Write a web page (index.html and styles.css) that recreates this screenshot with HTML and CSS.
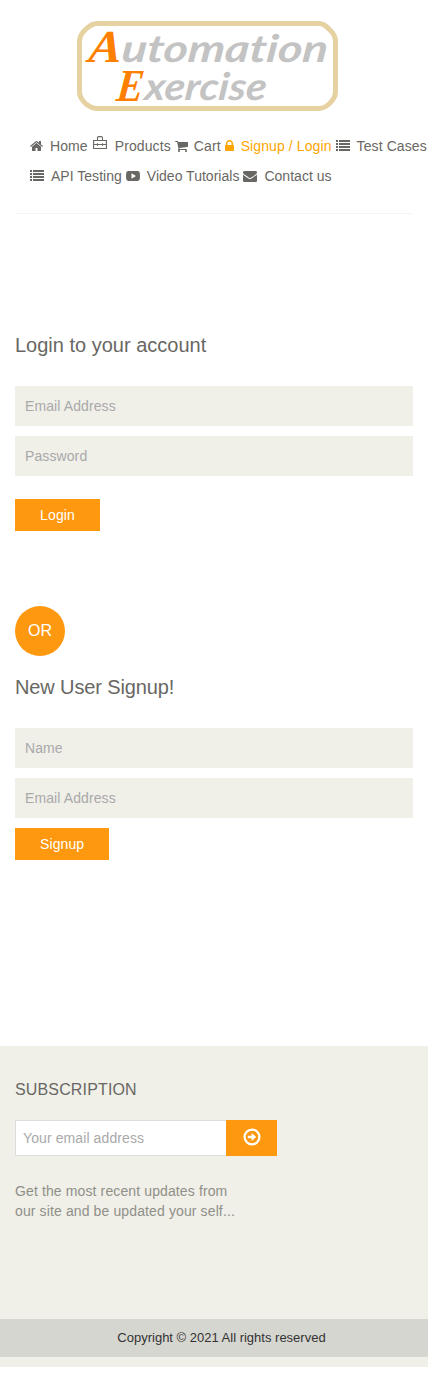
FILE: index.html
```html
<!DOCTYPE html>
<html lang="en">
<head>
<meta charset="utf-8">
<title>Automation Exercise - Signup / Login</title>
<link rel="stylesheet" href="styles.css">
</head>
<body>
<header class="header">
  <a class="logo" aria-label="Automation Exercise">
    <svg width="262" height="91" viewBox="0 0 262 91">
      <path class="logo-frame" d="M20 2.500H242Q247 2.500 252 8Q258.500 14 258.500 20V71Q258.500 77 252 83Q247 87.500 242 87.500H20Q15 87.500 9 83Q2.500 77 2.500 71V20Q2.500 14 9 8Q15 2.500 20 2.500Z"/>
      <g transform="skewX(-6)">
        <text class="logo-cap" x="15" y="41" textLength="33" lengthAdjust="spacingAndGlyphs">A</text>
        <text class="logo-word" x="48" y="41" textLength="206" lengthAdjust="spacingAndGlyphs">utomation</text>
        <text class="logo-cap" x="47" y="80" textLength="27" lengthAdjust="spacingAndGlyphs">E</text>
        <text class="logo-word" x="75" y="79" textLength="122" lengthAdjust="spacingAndGlyphs">xercise</text>
      </g>
    </svg>
  </a>
  <nav class="nav">
    <ul class="nav-row">
      <li><svg class="icon home" viewBox="64 128 1664 1536"><path d="M1472 992v480q0 26-19 45t-45 19h-384v-384h-256v384h-384q-26 0-45-19t-19-45v-480q0-1 .5-3t.5-3l575-474 575 474q1 2 1 6zm223-69l-62 74q-8 9-21 11h-3q-13 0-21-7l-692-577-692 577q-12 8-24 7-13-2-21-11l-62-74q-8-10-7-23.500t11-21.500l719-599q32-26 76-26t76 26l244 204v-195q0-14 9-23t23-9h192q14 0 23 9t9 23v408l219 182q10 8 11 21.500t-7 23.500z"/></svg>Home</li>
      <li><svg class="icon bag" viewBox="0 0 14 14"><path class="line" d="M.6 4.500H13.400V12.500H.6ZM4.500 4.500V2Q4.500 .6 5.800 .6H8.200Q9.500 .6 9.500 2V4.500M.6 8.500H13.400M4.500 7.300V9.700M9.500 7.300V9.700"/></svg>Products</li>
      <li><svg class="icon cart" viewBox="64 256 1664 1408"><path d="M704 1536q0 52-38 90t-90 38-90-38-38-90 38-90 90-38 90 38 38 90zm896 0q0 52-38 90t-90 38-90-38-38-90 38-90 90-38 90 38 38 90zm128-1088v512q0 24-16.500 42.500t-40.500 21.500l-1044 122q13 60 13 70 0 16-24 64h920q26 0 45 19t19 45-19 45-45 19h-1024q-26 0-45-19t-19-45q0-11 8-31.500t16-36 21.500-40 15.500-29.500l-177-823h-204q-26 0-45-19t-19-45 19-45 45-19h256q16 0 28.500 6.500t19.500 15.500 13 24.500 8 26 5.500 29.500 4.500 26h1201q26 0 45 19t19 45z"/></svg>Cart</li>
      <li class="active"><svg class="icon lock" viewBox="320 128 1152 1408"><path d="M640 768h512v-192q0-106-75-181t-181-75-181 75-75 181v192zm832 96v576q0 40-28 68t-68 28h-960q-40 0-68-28t-28-68v-576q0-40 28-68t68-28h32v-192q0-184 132-316t316-132 316 132 132 316v192h32q40 0 68 28t28 68z"/></svg>Signup / Login</li>
      <li><svg class="icon list" viewBox="0 0 14 11"><path d="M0 0h2v2H0zM3 0h11v2H3zM0 3h2v2H0zM3 3h11v2H3zM0 6h2v2H0zM3 6h11v2H3zM0 9h2v2H0zM3 9h11v2H3z"/></svg>Test Cases</li>
    </ul>
    <ul class="nav-row second">
      <li><svg class="icon list" viewBox="0 0 14 11"><path d="M0 0h2v2H0zM3 0h11v2H3zM0 3h2v2H0zM3 3h11v2H3zM0 6h2v2H0zM3 6h11v2H3zM0 9h2v2H0zM3 9h11v2H3z"/></svg>API Testing</li>
      <li><svg class="icon video" viewBox="0 0 14 10"><path fill-rule="evenodd" d="M2.300.1Q7-.1 11.700.1 13.600.2 13.800 2 14.100 5 13.800 8 13.600 9.800 11.700 9.900 7 10.100 2.300 9.900.4 9.800.2 8-.1 5 .2 2 .4.2 2.300.1ZM5.500 2.200V7.800L10 5Z"/></svg>Video Tutorials</li>
      <li><svg class="icon mail" viewBox="0 256 1792 1408"><path d="M1792 710v794q0 66-47 113t-113 47h-1472q-66 0-113-47t-47-113v-794q44 49 101 87 362 246 497 345 57 42 92.500 65.500t94.500 48 110 24.500h2q51 0 110-24.500t94.500-48 92.500-65.500q170-123 498-345 57-39 100-87zm0-294q0 79-49 151t-122 123q-376 261-468 325-10 7-42.500 31t-54 38.500-52 32.500-57.500 27-50 9h-2q-23 0-50-9t-57.500-27-52-32.500-54-38.500-42.500-31q-91-64-262-182.500t-205-142.500q-62-42-117-115.500t-55-136.500q0-78 41.500-130t118.500-52h1472q65 0 112.500 47t47.500 113z"/></svg>Contact us</li>
    </ul>
  </nav>
</header>
<main class="forms">
  <form class="login">
    <h2>Login to your account</h2>
    <input class="field" type="email" placeholder="Email Address">
    <input class="field" type="password" placeholder="Password">
    <button class="btn login-btn" type="button">Login</button>
  </form>
  <div class="or">OR</div>
  <form class="signup">
    <h2>New User Signup!</h2>
    <input class="field" type="text" placeholder="Name">
    <input class="field" type="email" placeholder="Email Address">
    <button class="btn" type="button">Signup</button>
  </form>
</main>
<footer class="footer">
  <div class="subscribe">
    <h3>SUBSCRIPTION</h3>
    <form class="subscribe-form">
      <input type="email" placeholder="Your email address">
      <button type="button" aria-label="Subscribe"><svg width="18" height="18" viewBox="0 0 18 18"><circle cx="9" cy="9" r="7.400"/><path d="M4.800 7.700H8.600V4.900L13.200 9 8.600 13.100V10.300H4.800Z"/></svg></button>
    </form>
    <p>Get the most recent updates from<br>our site and be updated your self...</p>
  </div>
  <div class="copyright">Copyright © 2021 All rights reserved</div>
</footer>
</body>
</html>
```

FILE: styles.css
```css
* { box-sizing: border-box; }
body {
  margin: 0;
  background: #fff;
  color: #696763;
  font: 14px/20px "Liberation Sans", Arial, sans-serif;
  letter-spacing: .1px;
  overflow-x: hidden;
}
h2, h3, p, ul { margin: 0; padding: 0; font-weight: 400; }
input, button { font: inherit; letter-spacing: .1px; border: 0; border-radius: 0; outline: 0; }
input::placeholder { color: #a9a9a9; opacity: 1; }

.header { margin: 0 15px; height: 214px; padding-top: 21px; border-bottom: 1px solid #f5f5f5; }
.logo { display: block; margin-left: 62px; height: 91px; letter-spacing: 0; }
.logo svg { display: block; }
.logo-frame { fill: #fff; stroke: #e6d1a1; stroke-width: 5; }
.logo-cap { fill: #ff7f00; font: italic 700 46px "Liberation Serif", serif; }
.logo-word { fill: #c3c3c3; font: italic 700 38px Lato, sans-serif; font-variant-ligatures: none; }

.nav { padding: 19px 0 0 15px; }
.nav-row { display: flex; gap: 4px; height: 30px; list-style: none; white-space: nowrap; line-height: 30px; }
.nav-row li { display: flex; align-items: center; flex: none; }
.second { letter-spacing: .02px; }
.active { color: #ffa500; }
.icon { flex: none; fill: currentColor; }
.home { width: 13px; height: 12px; margin-right: 7px; }
.bag { width: 14px; height: 14px; margin: 0 8px 6px 1px; }
.line { fill: none; stroke: currentColor; stroke-width: 1.1; }
.cart { width: 13px; height: 11px; margin: 1px 6px 0 0; }
.lock { width: 9px; height: 11px; margin: 0 7px 1px 0; }
.list { width: 14px; height: 11px; margin: 0 7px 1px 0; }
.video { width: 14px; height: 10px; margin-right: 7px; }
.mail { width: 14px; height: 11px; margin: 1px 7px 0 0; }

.forms { padding: 121px 15px 0; height: 832px; }
.login, .signup { display: flex; flex-direction: column; align-items: flex-start; gap: 10px; }
h2 { font-size: 20px; line-height: 20px; margin-bottom: 21px; letter-spacing: 0; }
.signup h2 { letter-spacing: -.12px; }
.field { width: 100%; height: 40px; padding: 0 10px; background: #f0f0e9; }
.btn { height: 32px; padding: 0 25px; background: #fe980f; color: #fff; }
.login-btn { width: 85px; margin-top: 13px; }
.or { width: 50px; height: 50px; margin: 75px 0 21px; border-radius: 50%; background: #fe980f; color: #fff; font-size: 16px; line-height: 50px; letter-spacing: 0; text-align: center; }

.footer { height: 321px; background: #f0f0e9; }
.subscribe { height: 273px; padding: 34px 15px 0; }
h3 { font-size: 16px; line-height: 20px; margin-bottom: 20px; letter-spacing: .15px; }
.subscribe-form { display: flex; }
.subscribe-form input { width: 212px; height: 36px; padding: 0 7px; border: 1px solid #ddd; border-right: 0; background: #fff; }
.subscribe-form button { width: 51px; height: 36px; margin-left: -1px; padding: 0 0 2px; background: #fe980f; display: flex; align-items: center; justify-content: center; }
.subscribe-form circle { fill: none; stroke: #fff; stroke-width: 2.3; }
.subscribe-form path { fill: #fff; }
.subscribe p { margin-top: 25px; color: #8f8f88; letter-spacing: .12px; }
.copyright { height: 38px; padding-left: 15px; background: #d6d6d0; color: #333; font-size: 13px; line-height: 38px; letter-spacing: 0; text-align: center; }
```
